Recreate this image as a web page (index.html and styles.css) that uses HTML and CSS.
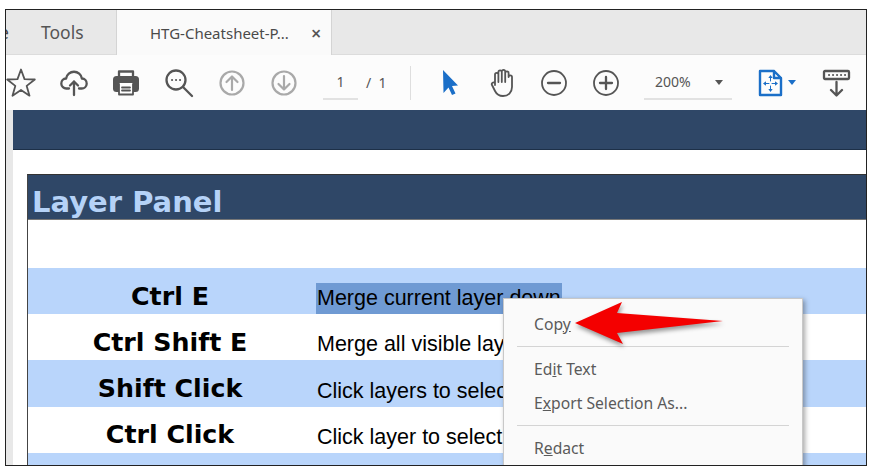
FILE: index.html
```html
<!DOCTYPE html>
<html lang="en">
<head>
<meta charset="utf-8">
<title>HTG-Cheatsheet</title>
<link rel="stylesheet" href="styles.css">
</head>
<body>
<div class="frame">
  <div class="tabs">
    <div class="tab tab-tools"><span class="tab-home">Home</span><span class="tab-label">Tools</span></div>
    <div class="tab tab-doc"><span class="tab-name">HTG-Cheatsheet-P...</span><span class="tab-close">×</span></div>
  </div>
  <div class="toolbar">
    <span class="tool tool-star"><svg width="30" height="30" viewBox="0 0 30 30"><polygon class="line" points="15,1.5 18.5,11.1 28.8,11.5 20.7,17.9 23.5,27.7 15,22 6.5,27.7 9.3,17.9 1.2,11.5 11.5,11.1"/></svg></span>
    <span class="tool tool-cloud"><svg width="30" height="30" viewBox="0 0 30 30"><path class="line thick" d="M10 20.500H7.500a5 5 0 0 1-.4-10a8 8 0 0 1 15.800 0a5 5 0 0 1-.4 10H20"/><path class="line thick" d="M15 27V13.500M11 17.500l4-4 4 4"/></svg></span>
    <span class="tool"><svg width="30" height="30" viewBox="0 0 30 30"><path class="line thick" d="M8 9V3.500h14V9"/><rect class="fill" x="2" y="8" width="26" height="16" rx="3.500"/><rect class="paper" x="8" y="15" width="14" height="11"/><path class="line" d="M8 16v10.500h14V16M11 19.500h8M11 22.500h8"/></svg></span>
    <span class="tool tool-search"><svg width="30" height="30" viewBox="0 0 30 30"><circle class="line thick" cx="12" cy="12" r="9.500"/><path class="line thick" d="M19 19l9 9"/><path class="dots" d="M8 12h.1M12 12h.1M16 12h.1"/></svg></span>
    <span class="tool tool-up"><svg width="30" height="30" viewBox="0 0 30 30"><circle class="line muted" cx="15" cy="15" r="11.500"/><path class="line muted" d="M15 22V8.500M9.500 14L15 8.500l5.500 5.500"/></svg></span>
    <span class="tool"><svg width="30" height="30" viewBox="0 0 30 30"><circle class="line muted" cx="15" cy="15" r="11.500"/><path class="line muted" d="M15 8v13.500M9.500 16l5.500 5.500 5.500-5.500"/></svg></span>
    <span class="page-input">1</span>
    <span class="page-total">/&nbsp;&nbsp;1</span>
    <span class="divider"></span>
    <span class="tool tool-cursor"><svg width="30" height="30" viewBox="0 0 30 30"><polygon class="blue-fill" points="8,2 23,17.500 17,18 20.500,25.500 17,27 13.500,19.500 8.500,25"/></svg></span>
    <span class="tool"><svg width="30" height="30" viewBox="0 0 30 30"><path class="line" d="M8 17V6.500a1.700 1.700 0 0 1 3.400 0V4a1.700 1.700 0 0 1 3.400 0v-.5a1.700 1.700 0 0 1 3.400 0V5a1.700 1.700 0 0 1 3.400 0v4a1.700 1.700 0 0 1 3.400 0V19c0 5.500-3.800 9-9 9-4 0-6.500-2-8-5l-3-6c-1-2 1.500-3.500 3-1.800zM11.400 4V14M14.800 4V14M18.200 4V14"/></svg></span>
    <span class="tool"><svg width="30" height="30" viewBox="0 0 30 30"><circle class="line" cx="15" cy="15" r="12"/><path class="line thick" d="M9 15h12"/></svg></span>
    <span class="tool"><svg width="30" height="30" viewBox="0 0 30 30"><circle class="line" cx="15" cy="15" r="12"/><path class="line thick" d="M9 15h12M15 9v12"/></svg></span>
    <span class="zoom-box"><span>200%</span><span class="caret"></span></span>
    <span class="tool-doc"><svg width="26" height="28" viewBox="0 0 26 28"><path class="blue-line" d="M3 2h14l7 7v17H3zM17 2v7h7"/><path class="blue-thin" d="M13.500 9v3M13.500 17v3M9 14.500h3M15 14.500h3"/><path class="blue-fill" d="M13.500 6l2.200 3h-4.400zM13.500 23l2.200-3h-4.400zM6 14.500l3-2.200v4.400zM21 14.500l-3-2.200v4.400z"/></svg></span>
    <span class="caret caret-blue"></span>
    <span class="tool-stamp"><svg width="30" height="28" viewBox="0 0 30 28"><rect class="line thick" x="2" y="2" width="25" height="8" rx="1"/><path class="dots" d="M7 6h.1M11 6h.1M15 6h.1M19 6h.1M23 6h.1"/><path class="line thick" d="M14.500 13v13M9 21l5.500 5.500L20 21"/></svg></span>
  </div>
  <div class="viewer">
    <div class="gutter"></div>
    <div class="doc">
      <div class="band"></div>
      <div class="panel">
        <h1 class="panel-title">Layer Panel</h1>
        <div class="row row-blue"><span class="key">Ctrl E</span><span class="desc"><span class="selected">Merge current layer down</span></span></div>
        <div class="row"><span class="key">Ctrl Shift E</span><span class="desc">Merge all visible layers</span></div>
        <div class="row row-blue"><span class="key">Shift Click</span><span class="desc">Click layers to select</span></div>
        <div class="row"><span class="key">Ctrl Click</span><span class="desc">Click layer to select</span></div>
        <div class="row row-blue"></div>
      </div>
    </div>
  </div>
  <div class="menu">
    <div class="menu-item">Cop<u>y</u></div>
    <div class="menu-sep"></div>
    <div class="menu-item">Ed<u>i</u>t Text</div>
    <div class="menu-item">E<u>x</u>port Selection As...</div>
    <div class="menu-sep"></div>
    <div class="menu-item">R<u>e</u>dact</div>
  </div>
  <svg class="pointer" width="160" height="52" viewBox="0 0 160 52"><polygon points="5,22 52,1 47,12 153,20 47,32 53,43"/></svg>
</div>
</body>
</html>
```

FILE: styles.css
```css
html, body {
  margin: 0;
  padding: 0;
  background: #fff;
}
body {
  height: 475px;
  overflow: hidden;
}
.frame {
  position: relative;
  box-sizing: border-box;
  width: 862px;
  height: 457px;
  margin: 9px 0 0 5px;
  border: 1px solid #222;
  overflow: hidden;
  background: #fff;
  font-family: "Noto Sans", "Open Sans", sans-serif;
  color: #555;
}
.tabs {
  display: flex;
  height: 45px;
  box-sizing: border-box;
  background: #e8e8e8;
  border-bottom: 1px solid #dcdcdc;
}
.tab {
  display: flex;
  align-items: center;
  white-space: nowrap;
}
.tab-tools {
  width: 110px;
  font-size: 17.500px;
}
.tab-home {
  margin-left: -47px;
  width: 47px;
  color: #444;
}
.tab-label {
  margin-left: 35px;
}
.tab-doc {
  width: 214px;
  height: 45px;
  background: #fafafa;
  border-left: 1px solid #d4d4d4;
  border-right: 1px solid #d4d4d4;
  font-size: 15px;
  color: #4a4a4a;
}
.tab-name {
  margin-left: 33px;
  width: 161px;
}
.tab-close {
  font-size: 18px;
  font-weight: 600;
  line-height: 1;
  color: #555;
}
.toolbar {
  display: flex;
  align-items: center;
  height: 55px;
  background: #fcfcfc;
}
.tool {
  display: flex;
  justify-content: center;
  width: 52px;
  flex: none;
}
.tool-star {
  width: 30px;
}
.tool-cloud {
  margin-left: 12px;
}
.tool-search {
  margin-left: 1px;
}
.tool-up {
  margin-left: 1px;
}
.line, .blue-line, .blue-thin, .dots {
  fill: none;
  stroke-linejoin: round;
  stroke-linecap: round;
}
.line {
  stroke: #555;
  stroke-width: 1.800;
}
.thick {
  stroke-width: 2.300;
}
.muted {
  stroke: #a9a9a9;
  stroke-width: 2.200;
}
.dots {
  stroke: #555;
  stroke-width: 2;
}
.fill {
  fill: #555;
}
.paper {
  fill: #fff;
}
.blue-fill {
  fill: #1b6fc8;
}
.blue-line {
  stroke: #1b6fc8;
  stroke-width: 2.400;
}
.blue-thin {
  stroke: #1b6fc8;
  stroke-width: 1;
}
.page-input {
  width: 35px;
  margin-left: 13px;
  padding: 8px 0 7px;
  text-align: center;
  font-size: 14px;
  line-height: 18px;
  border-bottom: 2px solid #e2e2e2;
  flex: none;
}
.page-total {
  width: 44px;
  margin-left: 8px;
  font-size: 14px;
  flex: none;
}
.divider {
  width: 1px;
  height: 34px;
  background: #dedede;
  flex: none;
}
.tool-cursor {
  margin-left: 13px;
}
.zoom-box {
  display: flex;
  align-items: center;
  justify-content: space-between;
  box-sizing: border-box;
  width: 88px;
  margin-left: 12px;
  padding: 8px 9px 7px 11px;
  font-size: 14px;
  line-height: 18px;
  border-bottom: 2px solid #e2e2e2;
  flex: none;
}
.caret {
  width: 0;
  height: 0;
  border-left: 4.500px solid transparent;
  border-right: 4.500px solid transparent;
  border-top: 5px solid #555;
  flex: none;
}
.tool-doc {
  display: flex;
  margin-left: 25px;
  flex: none;
}
.caret-blue {
  margin-left: 5px;
  border-top-color: #1b6fc8;
}
.tool-stamp {
  display: flex;
  margin-left: 26px;
  flex: none;
}
.viewer {
  display: flex;
  height: 400px;
}
.gutter {
  width: 7px;
  background: #e8e8e8;
  flex: none;
}
.doc {
  flex: 1;
  min-width: 0;
}
.band {
  height: 40px;
  box-sizing: border-box;
  background: #2f4767;
  border-bottom: 1px solid #1d3048;
}
.panel {
  margin: 24px 0 0 14px;
  border-left: 1px solid #444;
  border-top: 1px solid #333;
  height: 400px;
}
.panel-title {
  margin: 0 0 48px;
  height: 45px;
  box-sizing: border-box;
  padding-left: 4px;
  background: #2f4767;
  border-bottom: 1px solid #777;
  color: #b5d2f7;
  font-family: "DejaVu Sans", Verdana, sans-serif;
  font-size: 29px;
  font-weight: 700;
  line-height: 55px;
}
.row {
  display: flex;
  align-items: center;
  height: 46.200px;
  color: #000;
}
.row-blue {
  background: #b9d5fb;
}
.key {
  width: 284px;
  text-align: center;
  font-family: "DejaVu Sans", Verdana, sans-serif;
  font-weight: 700;
  font-size: 25.300px;
  padding-top: 10px;
  flex: none;
}
.desc {
  display: flex;
  align-items: flex-end;
  height: 100%;
  margin-left: 5px;
  box-sizing: border-box;
  font-family: "Liberation Sans", Arial, sans-serif;
  font-size: 21.500px;
  line-height: 30px;
  padding-bottom: 1px;
  white-space: nowrap;
}
.selected {
  background: #6f9ad3;
  margin-bottom: -1px;
  padding: 0 1px 1px 1px;
  margin-left: -1px;
}
.menu {
  position: absolute;
  left: 497px;
  top: 288px;
  width: 300px;
  height: 190px;
  box-sizing: border-box;
  padding: 8px 13px;
  background: #fafafa;
  border: 1px solid #c8c8c8;
  box-shadow: 2px 2px 5px rgba(0, 0, 0, 0.35);
  font-size: 15.700px;
  color: #5a5a5a;
}
.menu-item {
  height: 34px;
  line-height: 34px;
  padding-left: 17px;
  white-space: nowrap;
}
.menu-sep {
  height: 1px;
  margin: 5px 0;
  background: #d4d4d4;
}
.pointer {
  position: absolute;
  left: 564px;
  top: 291px;
  overflow: visible;
}
.pointer polygon {
  fill: #f40000;
  filter: drop-shadow(1px 3px 2px rgba(0, 0, 0, 0.4));
}
```
